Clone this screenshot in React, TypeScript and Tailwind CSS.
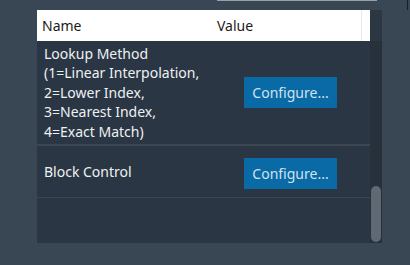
export default function App() {
  const font = { fontFamily: '"Noto Sans", "Open Sans", sans-serif' };
  return (
    <div className="w-[410px] h-[265px] bg-[#394653] overflow-hidden relative" style={font}>
      <div className="h-[10px] relative">
        <div className="ml-[217px] w-[160px] h-[1px] bg-[#9aa0a6]" />
        <div className="absolute right-[2px] top-0 w-[1px] h-[10px] bg-[#16202a]" />
      </div>
      <div className="ml-[37px] w-[345px] h-[233px] flex bg-[#2a3643]">
        <div className="w-[333px] flex flex-col">
          <div className="h-[31px] bg-white flex items-center text-[14px] text-[#1a1a1a] relative">
            <div className="w-[175px] pl-[5px]">Name</div>
            <div className="pl-[5px]">Value</div>
            <div className="absolute left-[324px] top-0 w-[1px] h-full bg-[#e8e8e8]" />
          </div>
          <div className="h-[103px] flex items-center text-[14px] text-[#eef1f4]">
            <div className="w-[207px] pl-[7px] leading-[19.4px]">
              Lookup Method<br />
              (1=Linear Interpolation,<br />
              2=Lower Index,<br />
              3=Nearest Index,<br />
              4=Exact Match)
            </div>
            <button className="w-[93px] h-[31px] bg-[#0a6aa6] text-[#cfe3f1] text-[14px] flex items-center justify-center" style={font}>
              Configure...
            </button>
          </div>
          <div className="h-[2px] bg-[#3b4653]" />
          <div className="h-[51px] flex items-center text-[14px] text-[#eef1f4]">
            <div className="w-[207px] pl-[7px]">Block Control</div>
            <button className="w-[93px] h-[31px] bg-[#0a6aa6] text-[#cfe3f1] text-[14px] flex items-center justify-center mt-[4px]" style={font}>
              Configure...
            </button>
          </div>
          <div className="h-[1px] bg-[#3b4653]" />
        </div>
        <div className="w-[12px] flex flex-col bg-[#27313c]">
          <div className="h-[31px] bg-[#2c3744]" />
          <div className="flex-1 flex flex-col justify-end items-center pb-[1px]">
            <div className="w-[10px] h-[56px] rounded-[5px] bg-[#5e6974]" />
          </div>
        </div>
      </div>
    </div>
  );
}
